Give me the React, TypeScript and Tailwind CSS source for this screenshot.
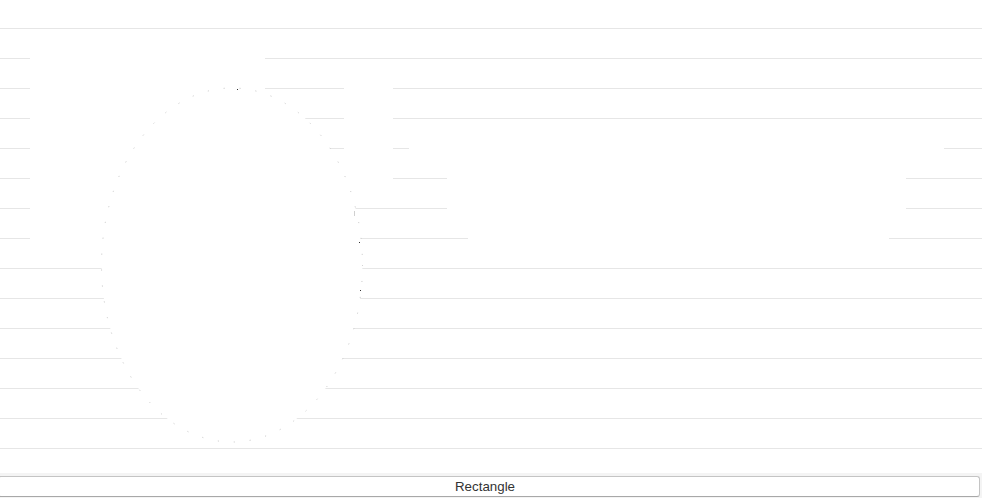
import React from "react";

const rows = Array.from({ length: 15 }, (_, i) => i);

export default function App() {
  return (
    <div className="w-[982px] h-[498px] flex flex-col bg-white overflow-hidden" style={{ fontFamily: '"Liberation Sans", Arial, sans-serif' }}>
      {/* canvas */}
      <div className="relative h-[473px] overflow-hidden bg-white">
        <div className="flex flex-col pt-[28px]">
          {rows.map((r) => (
            <div key={r} className="h-[30px] shrink-0 border-t border-[#e6e6e6]" />
          ))}
        </div>

        {/* shapes drawn on the canvas */}
        <div className="absolute left-[30px] top-[45px] w-[235px] h-[200px] bg-white" />
        <div className="absolute left-[344px] top-[70px] w-[49px] h-[125px] bg-white" />
        <div className="absolute left-[409px] top-[135px] w-[535px] h-[25px] bg-white" />
        <div className="absolute left-[447px] top-[160px] w-[459px] h-[65px] bg-white" />
        <div className="absolute left-[468px] top-[225px] w-[421px] h-[25px] bg-white" />

        <svg className="absolute left-[100px] top-[87px]" width="264" height="356" viewBox="0 0 264 356">
          <ellipse cx="132" cy="178" rx="130.5" ry="177" fill="#ffffff" stroke="#c4c4c4" strokeWidth="1" strokeDasharray="1 15" />
          <rect x="254" y="124" width="1" height="5" fill="#d0d0d0" />
          <rect x="137" y="2" width="1" height="1" fill="#333" />
          <rect x="259" y="155" width="1" height="1" fill="#333" />
          <rect x="260" y="203" width="1" height="1" fill="#333" />
        </svg>
      </div>

      {/* toolbar */}
      <div className="flex-1 bg-[#f4f4f4] pt-[3px] pr-[4px]">
        <button className="-ml-[2px] w-[982px] h-[21px] pr-[8px] border border-[#c4c4c4] border-b-[#a8a8a8] rounded-[3px] bg-white text-[13.33px] leading-none text-[#333] flex items-center justify-center">
          Rectangle
        </button>
      </div>
    </div>
  );
}
